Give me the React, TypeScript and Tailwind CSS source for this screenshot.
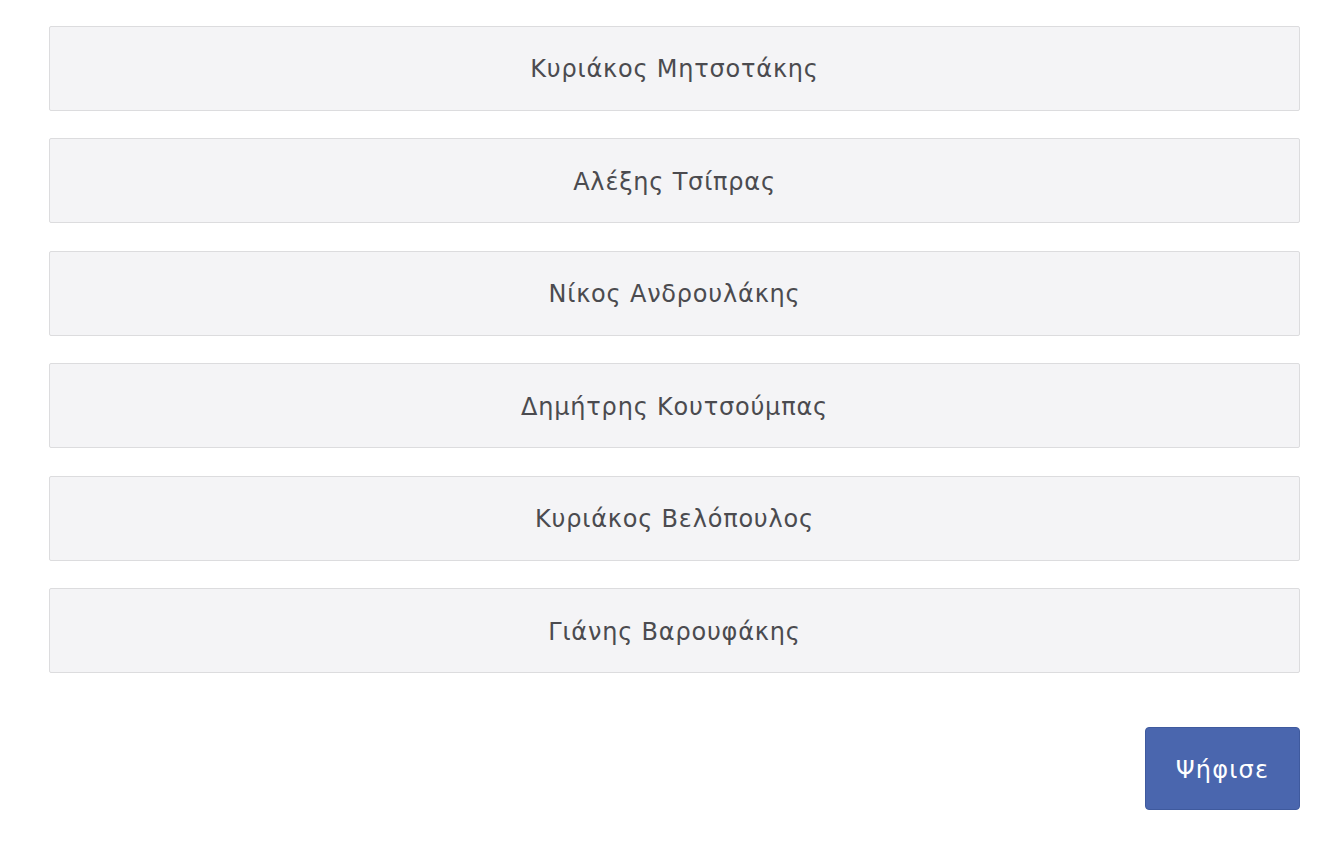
import React from 'react';

const candidates: string[] = [
  'Κυριάκος Μητσοτάκης',
  'Αλέξης Τσίπρας',
  'Νίκος Ανδρουλάκης',
  'Δημήτρης Κουτσούμπας',
  'Κυριάκος Βελόπουλος',
  'Γιάνης Βαρουφάκης',
];

export default function App() {
  return (
    <div className="min-h-screen w-full bg-white font-['DejaVu_Sans',sans-serif]">
      <div className="pl-[49px] pr-[35px] pt-[25.5px]">
        {/* Options */}
        <div className="flex flex-col gap-[27.5px]">
          {candidates.map((name, i) => (
            <button
              key={i}
              type="button"
              className="flex h-[85px] w-full items-center justify-center rounded-[2px] border border-[#dcdcde] bg-[#f4f4f6] pt-[2px] text-[24px] leading-none tracking-[0.8px] text-[#4b4b4f]"
            >
              {name}
            </button>
          ))}
        </div>

        {/* Submit */}
        <div className="mt-[54px] flex justify-end">
          <button
            type="button"
            className="flex h-[83px] w-[155px] items-center justify-center rounded-[4px] border border-[#3f5a9e] bg-[#4a66ae] pt-[2px] text-[24px] leading-none tracking-[1.2px] text-white"
          >
            Ψήφισε
          </button>
        </div>
      </div>
    </div>
  );
}
